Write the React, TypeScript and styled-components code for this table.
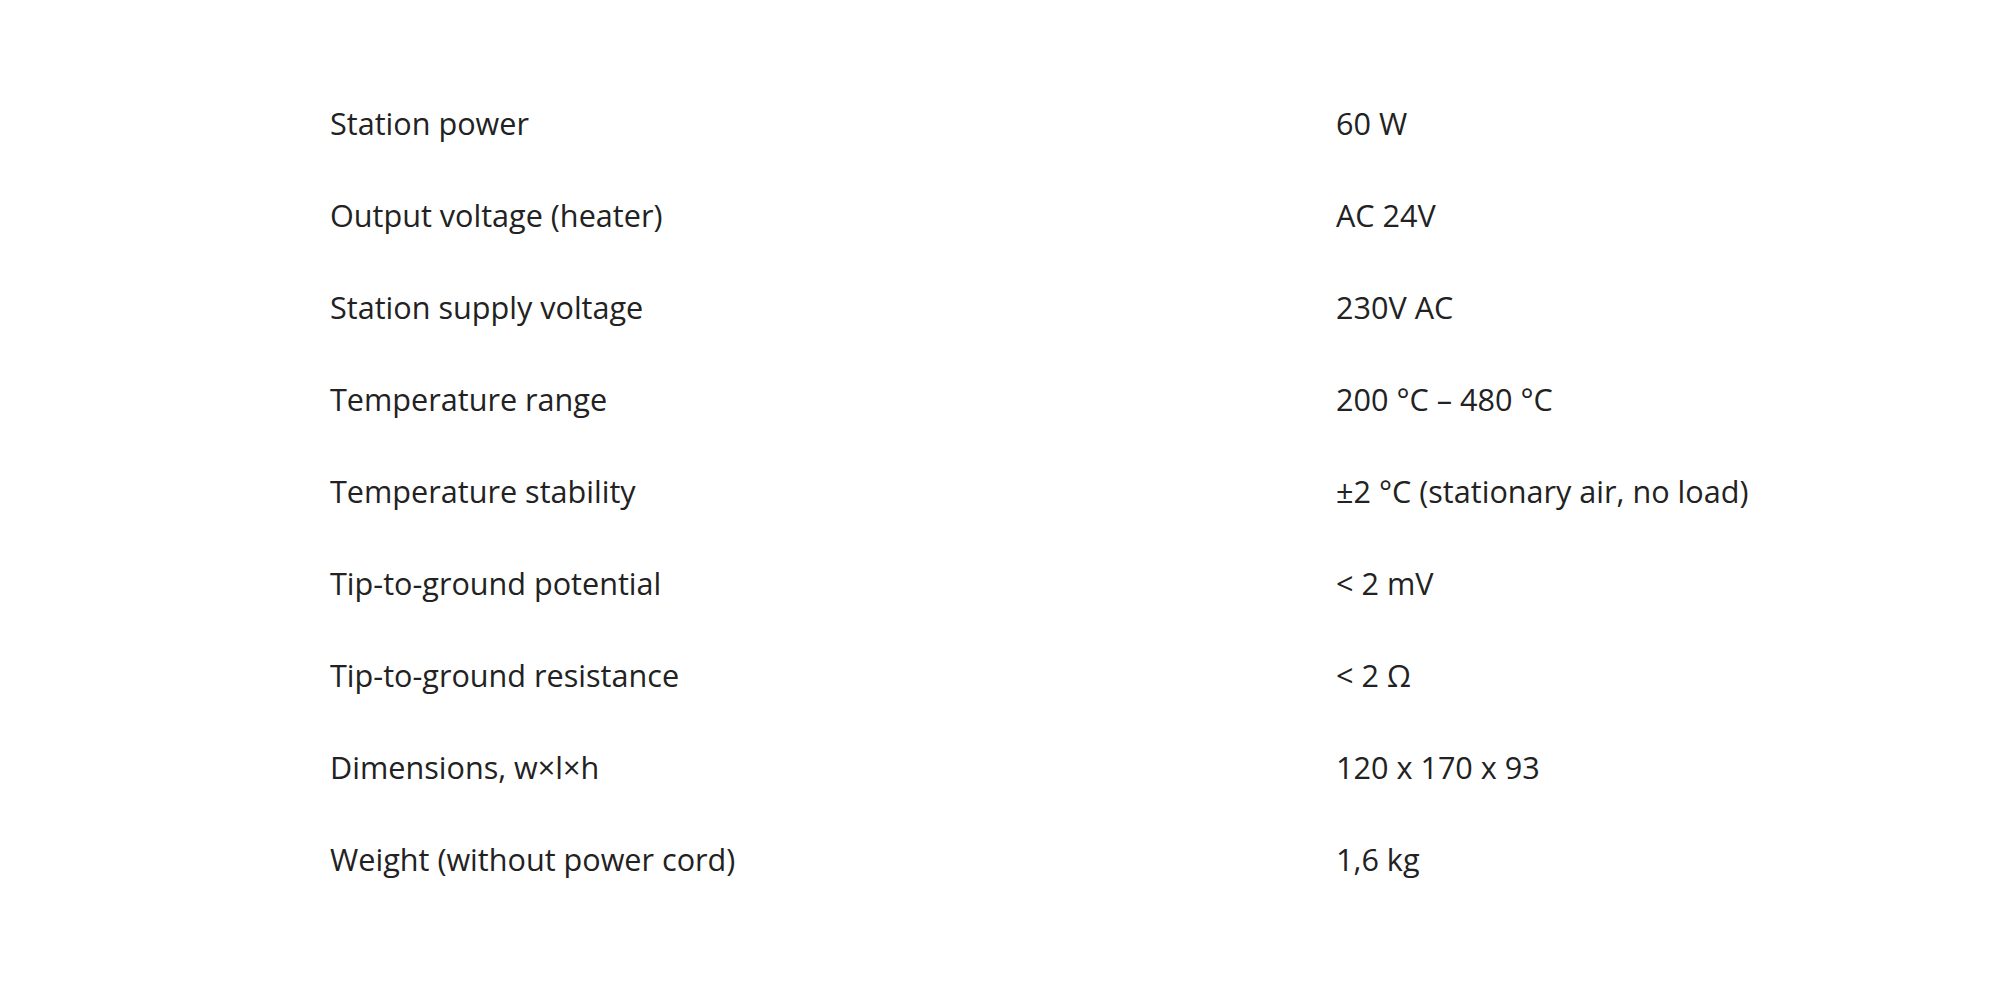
import React from 'react';
import styled, { createGlobalStyle } from 'styled-components';

const GlobalStyle = createGlobalStyle`
    body {
        margin: 0;
        background: #ffffff;
        font-family: 'Open Sans', 'Liberation Sans', sans-serif;
        color: #222222;
    }
`;

const Page = styled.section`
    padding: 77px 330px 0 330px;
`;

const SpecTable = styled.div`
    display: grid;
    grid-template-columns: 1006px 1fr;
`;

const Cell = styled.div`
    font-size: 30.6px;
    line-height: 92px;
    white-space: nowrap;
`;

const specs: [string, string][] = [
    ['Station power', '60 W'],
    ['Output voltage (heater)', 'AC 24V'],
    ['Station supply voltage', '230V AC'],
    ['Temperature range', '200 °C – 480 °C'],
    ['Temperature stability', '±2 °C (stationary air, no load)'],
    ['Tip-to-ground potential', '< 2 mV'],
    ['Tip-to-ground resistance', '< 2 Ω'],
    ['Dimensions, w×l×h', '120 x 170 x 93'],
    ['Weight (without power cord)', '1,6 kg'],
];

function App() {
    return (
        <>
            <GlobalStyle />
            <Page>
                <SpecTable>
                    {specs.map(([name, value]) => (
                        <React.Fragment key={name}>
                            <Cell>{name}</Cell>
                            <Cell>{value}</Cell>
                        </React.Fragment>
                    ))}
                </SpecTable>
            </Page>
        </>
    );
}

export default App;
